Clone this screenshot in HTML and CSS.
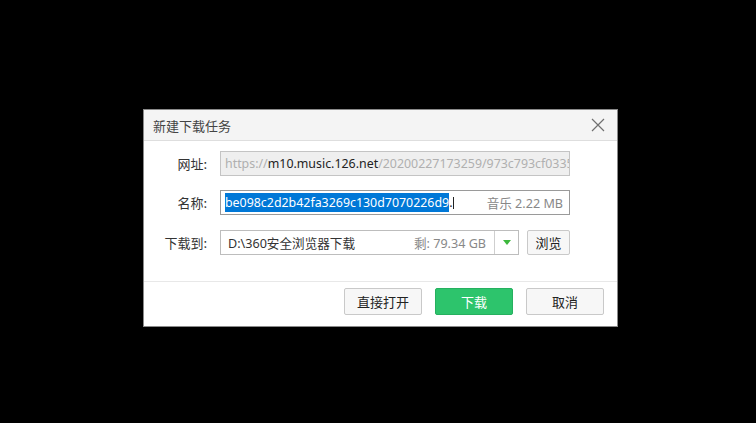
FILE: index.html
```html
<!DOCTYPE html>
<html lang="zh-CN">
<head>
<meta charset="utf-8">
<title>新建下载任务</title>
<link rel="stylesheet" href="styles.css">
</head>
<body>
<div class="dialog">
  <div class="titlebar">
    <span class="title">新建下载任务</span>
    <span class="close">
      <svg width="14" height="14" viewBox="0 0 14 14"><path d="M1 1L13 13M13 1L1 13" stroke="#707070" stroke-width="1.2" fill="none"/></svg>
    </span>
  </div>
  <div class="content">
    <div class="row">
      <span class="label">网址:</span>
      <div class="field url"><span class="dim">https://</span><span class="host">m10.music.126.net</span><span class="dim">/20200227173259/973c793cf0335</span></div>
    </div>
    <div class="row">
      <span class="label">名称:</span>
      <div class="field name"><span class="sel">be098c2d2b42fa3269c130d7070226d9</span><span class="ext">.</span><span class="caret"></span><span class="meta">音乐 2.22 MB</span></div>
    </div>
    <div class="row row3">
      <span class="label">下载到:</span>
      <div class="pathbox">
        <span class="path">D:\360安全浏览器下载</span>
        <span class="free">剩: 79.34 GB</span>
        <span class="drop"><span class="tri"></span></span>
      </div>
      <button class="btn small">浏览</button>
    </div>
  </div>
  <div class="footer">
    <button class="btn">直接打开</button>
    <button class="btn primary">下载</button>
    <button class="btn">取消</button>
  </div>
</div>
</body>
</html>
```

FILE: styles.css
```css
* { box-sizing: border-box; }
html, body { margin: 0; background: #000; }
body {
  padding: 109px 0 0 143px;
  font-family: "Noto Sans", "Noto Sans CJK SC", sans-serif;
  font-size: 13px;
  color: #333;
}
.dialog {
  width: 475px;
  height: 218px;
  background: #fff;
  border: 1px solid #8a8a8a;
  display: flex;
  flex-direction: column;
}
.titlebar {
  height: 31px;
  background: #f4f4f4;
  border-bottom: 1px solid #dedede;
  display: flex;
  align-items: center;
  justify-content: space-between;
  padding: 0 12px 0 9px;
}
.title { color: #444; font-size: 13px; font-family: "Noto Sans CJK SC", sans-serif; }
.close { display: flex; width: 14px; height: 14px; }
.content {
  padding: 10px 47px 0 0;
  display: flex;
  flex-direction: column;
  gap: 14px;
  height: 141px;
  border-bottom: 1px solid #e8e8e8;
}
.row { display: flex; align-items: center; height: 25px; }
.row3 { margin-top: 1px; }
.label {
  width: 63px;
  margin-right: 13px;
  text-align: right;
  font-family: "Noto Sans CJK SC", sans-serif;
  color: #333;
}
.field {
  flex: 1;
  height: 25px;
  display: flex;
  align-items: center;
  padding: 0 4px;
  white-space: nowrap;
  overflow: hidden;
  font-size: 12.4px;
}
.url { background: #efefef; border: 1px solid #c4c4c4; }
.dim { color: #b0b0b0; }
.host { color: #222; }
.name { border: 1px solid #9a9a9a; padding-left: 4px; }
.sel { background: #0078d7; color: #fff; line-height: 19px; }
.ext { color: #222; }
.caret { width: 1px; height: 12px; background: #222; margin-left: 1px; }
.meta { margin-left: auto; color: #888; font-size: 12.6px; padding-right: 2px; }
.pathbox {
  width: 299px;
  height: 25px;
  border: 1px solid #bdbdbd;
  display: flex;
  align-items: center;
  font-size: 12.6px;
}
.path { padding-left: 7px; color: #333; flex: 1; }
.free { color: #888; padding-right: 8px; }
.drop {
  width: 24px;
  height: 100%;
  border-left: 1px solid #cfcfcf;
  display: flex;
  align-items: center;
  justify-content: center;
}
.tri {
  width: 0; height: 0;
  border-left: 4px solid transparent;
  border-right: 4px solid transparent;
  border-top: 5px solid #3db83d;
}
.btn {
  font-family: "Noto Sans CJK SC", sans-serif;
  font-size: 13px;
  color: #222;
  background: #f7f7f7;
  border: 1px solid #c9c9c9;
  border-radius: 2px;
  width: 78px;
  height: 27px;
  padding: 0;
}
.btn.small { width: 43px; height: 25px; margin-left: 8px; }
.btn.primary { background: #2dc46c; border-color: #26b05f; color: #fff; }
.footer {
  flex: 1;
  display: flex;
  justify-content: flex-end;
  align-items: flex-start;
  gap: 13px;
  padding: 6px 13px 0 0;
}
```
